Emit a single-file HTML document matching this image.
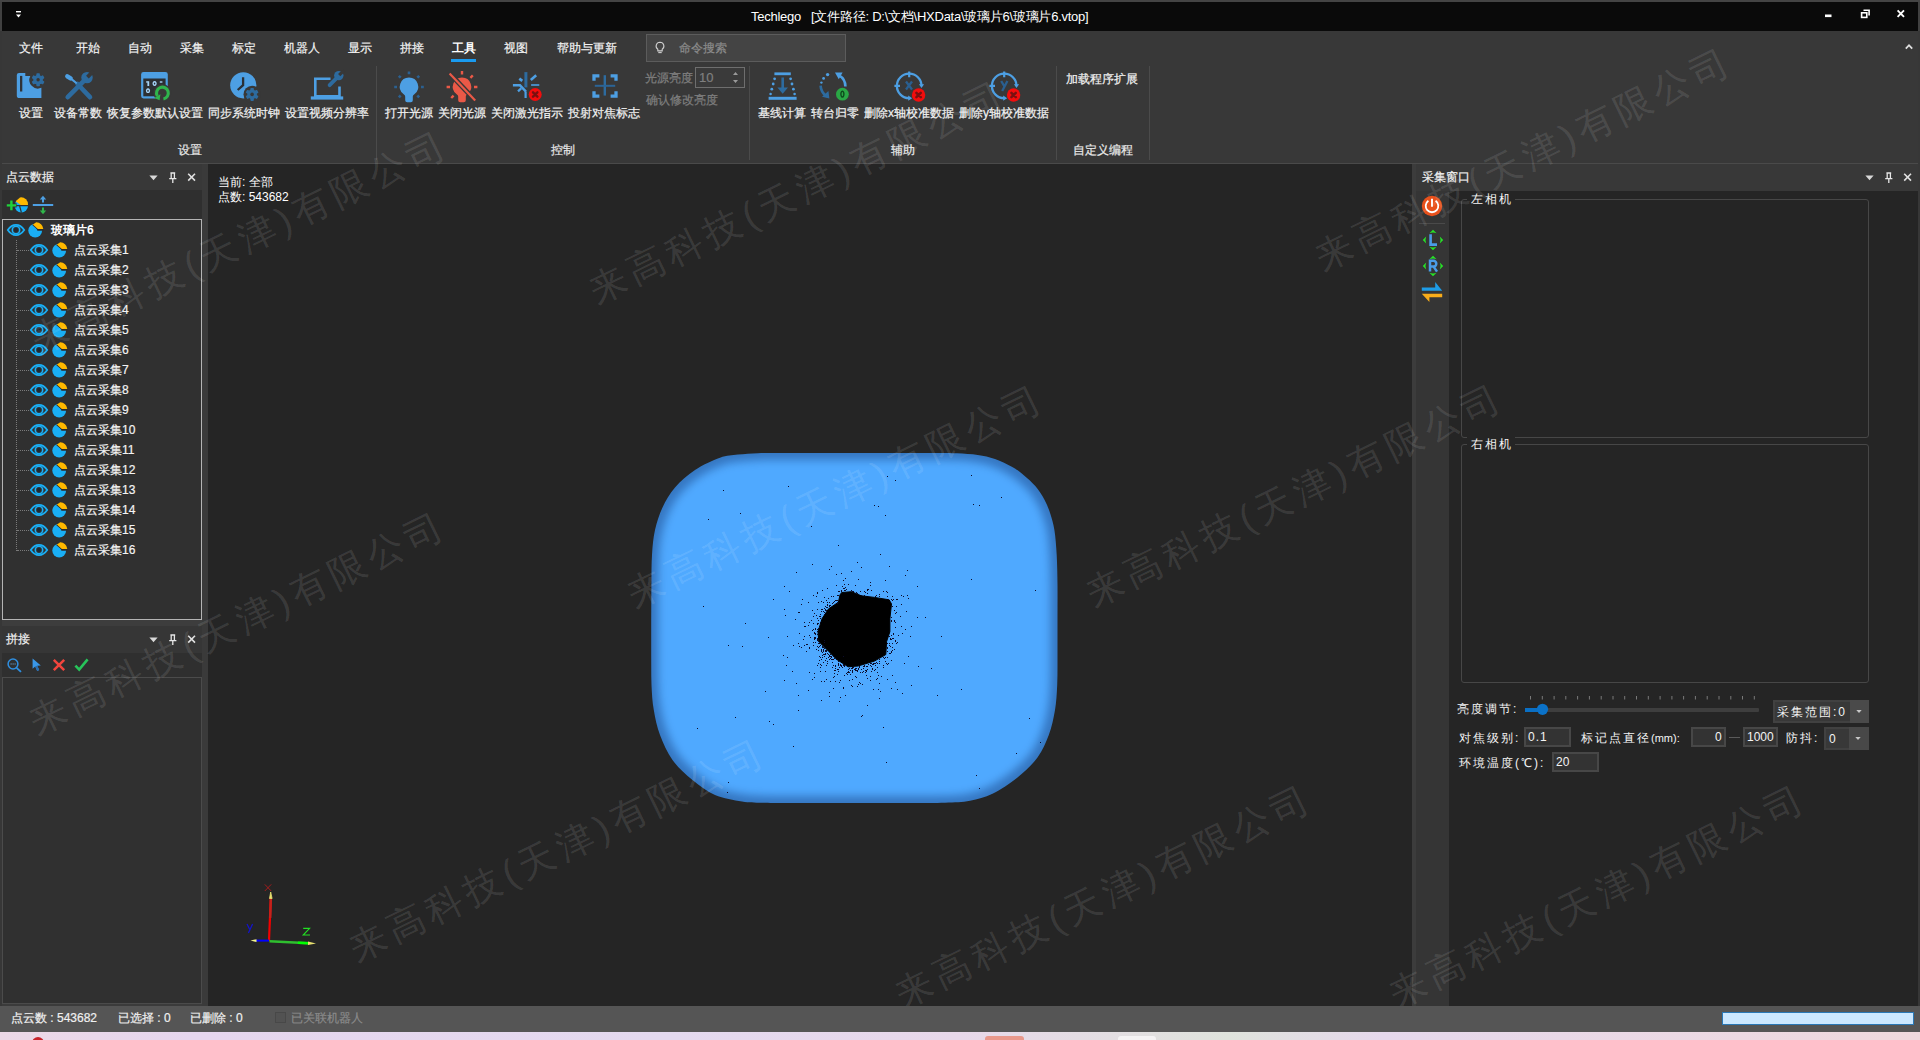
<!DOCTYPE html>
<html lang="zh">
<head>
<meta charset="utf-8">
<title>Techlego</title>
<style>
html,body{margin:0;padding:0;}
body{width:1920px;height:1040px;overflow:hidden;background:#444;font-family:"Liberation Sans",sans-serif;font-size:12px;color:#f0f0f0;position:relative;}
.a{position:absolute;white-space:nowrap;overflow:visible;}
.t{position:absolute;white-space:nowrap;line-height:14px;height:14px;-webkit-text-stroke:0.2px currentColor;}
svg{position:absolute;overflow:visible;}
#title{left:2px;top:2px;width:1916px;height:29px;background:#0a0a0a;}
#ribbon{left:2px;top:31px;width:1916px;height:132px;background:#383838;}
#ribline{left:2px;top:163px;width:1916px;height:1px;background:#4a4a4a;}
#main{left:2px;top:164px;width:1916px;height:842px;background:#3a3a3a;}
#view{left:208px;top:164px;width:1204px;height:842px;background:#252525;}
#status{left:0;top:1006px;width:1920px;height:26px;background:#555555;}
#desk{left:0;top:1032px;width:1920px;height:8px;background:linear-gradient(90deg,#ecd8e6 0%,#e6d6ee 10%,#e4d9ef 35%,#e8d8ea 50%,#dfe3dc 64%,#e6d8ec 72%,#efd9dd 100%);}
.vsep{position:absolute;width:1px;top:66px;height:94px;background:#4b4b4b;}
.tab{color:#f2f2f2;top:41px;}
.lbl{color:#f2f2f2;top:106px;text-align:center;}
.grp{color:#e8e8e8;top:143px;}
.dis{color:#7f7f7f;}
.ph{position:absolute;background:#383838;height:27px;}
.song{letter-spacing:2px;color:#f4f4f4;-webkit-text-stroke:0;}
.ns{-webkit-text-stroke:0;}
.inp{position:absolute;box-sizing:border-box;border:2px solid #474747;background:#333;height:20px;}
.wm{position:absolute;white-space:nowrap;font-size:37px;letter-spacing:5.5px;color:rgba(255,255,255,0.115);transform-origin:0 50%;transform:rotate(-26deg) translateX(-18.5px);line-height:40px;height:40px;font-weight:300;}
.wp{letter-spacing:5.5px;}
</style>
</head>
<body>
<div class="a" style="left:0;top:0;width:1920px;height:2px;background:#444;"></div>
<div class="a" style="left:0;top:2px;width:1920px;height:29px;background:#404040;"></div>
<div class="a" style="left:0;top:31px;width:1920px;height:975px;background:#373737;"></div>
<div class="a" id="title"></div>
<div class="a" id="ribbon"></div>
<div class="a" id="ribline"></div>
<div class="a" id="main"></div>
<div class="a" id="view"></div>
<div class="a" id="status"></div>
<div class="a" id="desk"></div>

<!-- TITLEBAR -->
<svg style="left:15px;top:9px" width="8" height="10" viewBox="0 0 8 10"><rect x="1" y="2" width="5" height="1.4" fill="#fff"/><path d="M1 5.4h5L3.5 8.4z" fill="#fff"/></svg>
<div class="t ns" style="left:751px;top:10px;font-size:13px;color:#fff;letter-spacing:-0.250px;">Techlego&nbsp;&nbsp;&nbsp;[文件路径: D:\文档\HXData\玻璃片6\玻璃片6.vtop]</div>
<svg style="left:1824px;top:8px" width="84" height="12" viewBox="0 0 84 12">
 <rect x="1" y="6.5" width="6.5" height="2.6" fill="#fff"/>
 <path d="M39.5 2.2h5.6v5.2" fill="none" stroke="#fff" stroke-width="1.6"/><rect x="37.6" y="4.8" width="5.2" height="4.6" fill="none" stroke="#fff" stroke-width="1.6"/>
 <path d="M73.6 2.4l6.4 6.4M80 2.4l-6.4 6.4" stroke="#fff" stroke-width="1.9"/>
</svg>

<!--TABS-->
<div class="t tab" style="left:19px;">文件</div>
<div class="t tab" style="left:76px;">开始</div>
<div class="t tab" style="left:128px;">自动</div>
<div class="t tab" style="left:180px;">采集</div>
<div class="t tab" style="left:232px;">标定</div>
<div class="t tab" style="left:284px;">机器人</div>
<div class="t tab" style="left:348px;">显示</div>
<div class="t tab" style="left:400px;">拼接</div>
<div class="t tab ns" style="left:452px;font-weight:bold;color:#fff;">工具</div>
<div class="a" style="left:451px;top:59px;width:25px;height:3px;background:#1a9bf0;"></div>
<div class="t tab" style="left:504px;">视图</div>
<div class="t tab" style="left:557px;">帮助与更新</div>
<div class="a" style="left:646px;top:34px;width:200px;height:28px;box-sizing:border-box;border:1px solid #5c5c5c;background:#444444;"></div>
<svg style="left:654px;top:41px" width="12" height="14" viewBox="0 0 12 14"><path d="M6 1.2a3.9 3.9 0 0 0-2.2 7.1v1.6h4.4V8.3A3.9 3.9 0 0 0 6 1.2z" fill="none" stroke="#d0d0d0" stroke-width="1.1"/><path d="M4.3 11.6h3.4" stroke="#d0d0d0" stroke-width="1.1"/></svg>
<div class="t" style="left:679px;top:41px;color:#8c8c8c;">命令搜索</div>
<svg style="left:1905px;top:43px" width="8" height="7" viewBox="0 0 8 7"><path d="M0.8 5.6L4 2.2l3.2 3.4" fill="none" stroke="#e0e0e0" stroke-width="1.8"/></svg>
<!--RIBBON-->
<!-- icon: settings -->
<svg style="left:16px;top:70px" width="30" height="30" viewBox="0 0 30 30">
 <path d="M3 2.900H9.300V5.900H14.300A8.700 8.700 0 0 0 25.400 17.850V28.100H3.400A2.600 2.600 0 0 1 0.800 25.500V5.100A2.200 2.200 0 0 1 3 2.900Z" fill="#4d9fe3"/>
 <rect x="4" y="5.900" width="2.300" height="15.600" fill="#2f3338"/>
 <g fill="#2d6b9f"><circle cx="22.1" cy="9.8" r="4.81"/><rect x="20.35" y="3.30" width="3.51" height="13.00" rx="0.8" transform="rotate(0 22.1 9.8)"/><rect x="20.35" y="3.30" width="3.51" height="13.00" rx="0.8" transform="rotate(60 22.1 9.8)"/><rect x="20.35" y="3.30" width="3.51" height="13.00" rx="0.8" transform="rotate(120 22.1 9.8)"/></g><circle cx="22.1" cy="9.8" r="1.7" fill="#3a3430"/>
</svg>
<!-- icon: tools -->
<svg style="left:64px;top:70px" width="30" height="30" viewBox="0 0 30 30">
 <path d="M13.500 14L26 27.200" stroke="#2d6b9f" stroke-width="4.600" stroke-linecap="round"/>
 <path d="M3.700 27.200L20.400 10.300" stroke="#2d6b9f" stroke-width="4.600" stroke-linecap="round"/>
 <circle cx="23" cy="7.600" r="5.700" fill="#2d6b9f"/>
 <path d="M23.400 7.200L29.400 1.200" stroke="#383838" stroke-width="3.800"/>
 <path d="M3.300 6.300L6.600 8.400" stroke="#4d9fe3" stroke-width="4.400" stroke-linecap="round"/>
 <path d="M6.600 8.400L12 12.800" stroke="#4d9fe3" stroke-width="2.100" stroke-linecap="round"/>
</svg>
<!-- icon: restore defaults -->
<svg style="left:140px;top:70px" width="32" height="32" viewBox="0 0 32 32">
 <rect x="1.100" y="2.100" width="26.700" height="26.400" rx="2.400" fill="#4d9fe3"/>
 <rect x="3.300" y="8.500" width="22.300" height="17.800" fill="#2c2f33"/>
 <g fill="#a4d2f6"><rect x="7.400" y="11.200" width="1.800" height="4.800"/><rect x="6.200" y="11.200" width="1.600" height="1.500"/>
 <path d="M14.600 11a2.100 2.500 0 1 0 .01 0zm0 1.400a.7 1.100 0 1 1-.01 0z" fill-rule="evenodd"/>
 <rect x="19.800" y="11.300" width="2.600" height="1.400"/>
 <path d="M8 18.300a2.100 2.400 0 1 0 .01 0zm0 1.400a.7 1 0 1 1-.01 0z" fill-rule="evenodd"/></g>
 <circle cx="22.400" cy="23.100" r="9" fill="#383838"/>
 <path d="M23.420 28.910A5.900 5.900 0 1 0 17.290 26.050" fill="none" stroke="#2fb44c" stroke-width="3.100"/>
 <path d="M14.100 27.900L20.400 24.200 19.600 30.300z" fill="#2fb44c"/>
</svg>
<!-- icon: clock -->
<svg style="left:229px;top:70px" width="32" height="32" viewBox="0 0 32 32">
 <circle cx="14.300" cy="15.300" r="13.100" fill="#4d9fe3"/>
 <path d="M14.100 7.200v8l-5.400 4.800" fill="none" stroke="#2a3036" stroke-width="2.300"/>
 <circle cx="23.100" cy="24.400" r="8.600" fill="#383838"/>
 <g fill="#2d6b9f"><circle cx="23.1" cy="24.4" r="4.81"/><rect x="21.35" y="17.90" width="3.51" height="13.00" rx="0.8" transform="rotate(0 23.1 24.4)"/><rect x="21.35" y="17.90" width="3.51" height="13.00" rx="0.8" transform="rotate(60 23.1 24.4)"/><rect x="21.35" y="17.90" width="3.51" height="13.00" rx="0.8" transform="rotate(120 23.1 24.4)"/></g><circle cx="23.1" cy="24.4" r="1.8" fill="#383838"/>
</svg>
<!-- icon: laptop wrench -->
<svg style="left:310px;top:70px" width="34" height="32" viewBox="0 0 34 32">
 <path d="M4 7.500h16.500v2.600H6.600V25h21.600V16.500h2.600V27H4z" fill="#4d9fe3"/>
 <rect x="0.800" y="26.400" width="32.400" height="3.200" fill="#4d9fe3"/>
 <path d="M19.600 15.200L27.600 7.200" stroke="#2d6b9f" stroke-width="3.800" stroke-linecap="round"/>
 <circle cx="28.800" cy="5.600" r="4.700" fill="#2d6b9f"/>
 <path d="M29.200 5.200L34 0.400" stroke="#383838" stroke-width="3.200"/>
</svg>
<div class="vsep" style="left:376px;"></div>
<!-- icon: bulb on -->
<svg style="left:392px;top:69px" width="34" height="36" viewBox="0 0 34 36">
 <path d="M17 8.600a9.200 9.200 0 0 0-5.600 16.500c1.200.9 1.800 1.800 1.800 2.800v3.400a2 2 0 0 0 2 2h3.600a2 2 0 0 0 2-2v-3.400c0-1 .6-1.900 1.800-2.800A9.200 9.200 0 0 0 17 8.600z" fill="#4d9fe3"/>
 <g stroke="#2b6090" stroke-width="2.600" stroke-linecap="butt"><path d="M17 2.600v2.600M6.800 6.800l1.900 1.900M27.200 6.800l-1.900 1.900M2.200 18h2.800M31.800 18H29M6.800 28.400l1.900-1.900M27.200 28.400l-1.900-1.900"/></g>
</svg>
<!-- icon: bulb off -->
<svg style="left:445px;top:69px" width="34" height="36" viewBox="0 0 34 36">
 <path d="M17 8.6a9.2 9.2 0 0 0-5.6 16.5c1.2.9 1.8 1.8 1.8 2.8v3.4a2 2 0 0 0 2 2h3.600a2 2 0 0 0 2-2v-3.4c0-1 .6-1.900 1.800-2.800A9.2 9.2 0 0 0 17 8.6z" fill="#ea5947"/>
 <g stroke="#ea5947" stroke-width="2.4"><path d="M17 2v3.4M27.8 6.4l-2.4 2.4M1.6 18h3.4M32.4 18H29M6.2 29l2.4-2.4"/></g>
 <path d="M4.6 4.4l25.6 27" stroke="#383838" stroke-width="5"/>
 <path d="M4.6 4.4l25.6 27" stroke="#ea5947" stroke-width="2.2"/>
</svg>
<!-- icon: laser off -->
<svg style="left:511px;top:70px" width="34" height="34" viewBox="0 0 34 34">
 <path d="M14.900 2.100V17.400" stroke="#2d6b9f" stroke-width="3"/>
 <g stroke="#4d9fe3" fill="none"><path d="M8.300 8.600l3 2.300M19.800 9.900l5.400-4.700" stroke-width="2.600"/><path d="M20.100 15h8.200" stroke-width="1.600"/><path d="M1.900 15.300H9l6 6.300" stroke-width="2.400"/><path d="M7 21.400l3.200-3M14.600 21.400V28" stroke-width="2.200"/></g>
 <circle cx="24.2" cy="24.5" r="6.500" fill="#f20d0d"/><path d="M22.0 22.3l4.400 4.400M26.4 22.3l-4.400 4.400" stroke="#7a1010" stroke-width="2.400" stroke-linecap="round"/>
</svg>
<!-- icon: focus mark -->
<svg style="left:591px;top:72px" width="28" height="28" viewBox="0 0 28 28">
 <g fill="none" stroke="#4d9fe3" stroke-width="3.300"><path d="M3 8.800V3.800h5.400M19.600 3.800H25v5M25 19.200v5h-5.400M8.400 24.200H3v-5"/></g>
 <path d="M13.800 3.200v20.400" stroke="#2d6b9f" stroke-width="2.400"/><path d="M3.800 13.800h20.400" stroke="#2b6496" stroke-width="2"/>
</svg>
<div class="t lbl" style="left:19px;">设置</div>
<div class="t lbl" style="left:54px;">设备常数</div>
<div class="t lbl" style="left:107px;">恢复参数默认设置</div>
<div class="t lbl" style="left:208px;">同步系统时钟</div>
<div class="t lbl" style="left:285px;">设置视频分辨率</div>
<div class="t lbl" style="left:385px;">打开光源</div>
<div class="t lbl" style="left:438px;">关闭光源</div>
<div class="t lbl" style="left:491px;">关闭激光指示</div>
<div class="t lbl" style="left:568px;">投射对焦标志</div>
<div class="t grp" style="left:178px;">设置</div>
<div class="t grp" style="left:551px;">控制</div>
<div class="t dis" style="left:645px;top:71px;">光源亮度</div>
<div class="a" style="left:695px;top:67px;width:50px;height:21px;box-sizing:border-box;border:1px solid #6e6e6e;background:#3a3a3a;"></div>
<div class="t dis" style="left:699px;top:71px;font-size:13px;">10</div>
<svg style="left:732px;top:71px" width="7" height="13" viewBox="0 0 7 13"><path d="M1 4l2.5-3 2.5 3zM1 9l2.5 3 2.5-3z" fill="#9a9a9a"/></svg>
<div class="t dis" style="left:646px;top:93px;">确认修改亮度</div>
<div class="vsep" style="left:749px;"></div>
<!-- icon: baseline -->
<svg style="left:767px;top:71px" width="32" height="30" viewBox="0 0 32 30">
 <rect x="7.4" y="1.4" width="16.4" height="2.8" fill="#4d9fe3"/><rect x="1.6" y="25.8" width="28" height="3" fill="#4d9fe3"/>
 <g fill="#4d9fe3"><circle cx="7.6" cy="7.8" r="1.4"/><circle cx="6.2" cy="13" r="1.4"/><circle cx="4.8" cy="18.2" r="1.4"/><circle cx="3.6" cy="23" r="1.3"/><circle cx="23.6" cy="7.8" r="1.4"/><circle cx="25" cy="13" r="1.4"/><circle cx="26.4" cy="18.2" r="1.4"/><circle cx="27.6" cy="23" r="1.3"/></g>
 <path d="M14.4 6.4h2.6v10h4l-5.3 6.4-5.3-6.4h4z" fill="#2d6b9f"/>
</svg>
<!-- icon: turntable zero -->
<svg style="left:818px;top:70px" width="34" height="32" viewBox="0 0 34 32">
 <g fill="#4d9fe3"><circle cx="9.6" cy="4.6" r="1.7"/><circle cx="5.6" cy="8.4" r="1.4"/><circle cx="3.4" cy="12.6" r="1.2"/></g>
 <path d="M2.6 15.6c.2 4.4 2.2 7.8 5.6 10.400" fill="none" stroke="#2d6b9f" stroke-width="2.6"/><path d="M4 26.8l7.400 1.600-1-7.400z" fill="#2d6b9f"/>
 <path d="M27.4 16.6c0-5-2.200-8.800-6.400-11.200" fill="none" stroke="#4d9fe3" stroke-width="2.6"/><path d="M17 2.400l7.600.2-3.800 6.600z" fill="#4d9fe3"/>
 <circle cx="24.4" cy="24.2" r="6.4" fill="#2aa745"/>
 <path d="M24.4 20.400a2.200 3.700 0 1 0 .01 0zm0 1.600a.8 2.100 0 1 1-.01 0z" fill="#0d4a1c" fill-rule="evenodd"/>
</svg>
<!-- icon: del x -->
<svg style="left:892px;top:70px" width="34" height="34" viewBox="0 0 34 34">
 <path d="M29.500 15.900A12.300 12.300 0 1 0 17.200 28.200" fill="none" stroke="#4d9fe3" stroke-width="2.300"/>
 <path d="M26.900 14.200h5.200l-2.600 3.800zM16.200 25.600v5.200l4-2.600z" fill="#4d9fe3"/>
 <path d="M17.200 1.600v5.600M2.400 15.900h5.600" stroke="#4d9fe3" stroke-width="2.200"/>
 <path d="M14 11.500l6 8M20 11.500l-6 8" stroke="#2a5f90" stroke-width="2.300"/>
 <circle cx="26.6" cy="25" r="6.700" fill="#f20d0d"/><path d="M24.4 22.8l4.400 4.400M28.8 22.8l-4.400 4.400" stroke="#7a1010" stroke-width="2.500" stroke-linecap="round"/>
</svg>
<!-- icon: del y -->
<svg style="left:987px;top:70px" width="34" height="34" viewBox="0 0 34 34">
 <path d="M29.500 15.900A12.300 12.300 0 1 0 17.200 28.200" fill="none" stroke="#4d9fe3" stroke-width="2.300"/>
 <path d="M26.900 14.200h5.200l-2.600 3.800zM16.200 25.600v5.200l4-2.600z" fill="#4d9fe3"/>
 <path d="M17.200 1.600v5.600M2.400 15.900h5.600" stroke="#4d9fe3" stroke-width="2.200"/>
 <path d="M14.200 11l3.200 5.400M20.400 11l-5.200 10" stroke="#2a5f90" stroke-width="2.300"/>
 <circle cx="26.6" cy="25" r="6.700" fill="#f20d0d"/><path d="M24.4 22.8l4.400 4.400M28.8 22.8l-4.400 4.400" stroke="#7a1010" stroke-width="2.500" stroke-linecap="round"/>
</svg>
<div class="t lbl" style="left:758px;">基线计算</div>
<div class="t lbl" style="left:811px;">转台归零</div>
<div class="t lbl" style="left:864px;">删除x轴校准数据</div>
<div class="t lbl" style="left:959px;">删除y轴校准数据</div>
<div class="t grp" style="left:891px;">辅助</div>
<div class="vsep" style="left:1056px;"></div>
<div class="t" style="left:1066px;top:72px;color:#f2f2f2;">加载程序扩展</div>
<div class="t grp" style="left:1073px;">自定义编程</div>
<div class="vsep" style="left:1149px;"></div>
<!--LEFT-->
<div class="a" style="left:2px;top:164px;width:200px;height:842px;background:#3b3b3b;"></div>
<div class="ph" style="left:2px;top:164px;width:200px;"></div>
<div class="t" style="left:6px;top:170px;color:#f0f0f0;">点云数据</div>
<svg style="left:149px;top:172px" width="48" height="12" viewBox="0 0 48 12"><path d="M0.400 3.600h8.200l-4.100 4.600z" fill="#d8d8d8"/><path d="M21.400 1h4.800M22.200 1v5.400M25.400 1v5.400M20.200 6.600h7.200M23.800 6.800V11" stroke="#e6e6e6" stroke-width="1.300" fill="none"/><path d="M39.200 1.800l6.800 6.800M46 1.800l-6.800 6.800" stroke="#e0e0e0" stroke-width="1.600"/></svg>
<div class="a" style="left:2px;top:190px;width:200px;height:29px;background:#2f2f2f;"></div>
<svg style="left:6px;top:196px" width="24" height="18" viewBox="0 0 24 18">
 <path d="M8.600 9.800a6.700 6.700 0 1 0 13.400 0 6.700 6.700 0 1 0-13.400 0z" fill="#1aaff5"/>
 <path d="M9.600 5.200L14 1.400a7 7 0 0 1 8 7.800H15.200z" fill="#ffb900"/>
 <path d="M13.600 9.800l1.800 6.800M9 9.600h13" stroke="#2f2f2f" stroke-width="1.200"/>
 <path d="M5.400 4.400v10M0.600 9.400h10" stroke="#2f2f2f" stroke-width="4.400"/>
 <path d="M5.400 4.600v9.600M0.800 9.400h9.400" stroke="#1fd13a" stroke-width="2.400"/>
</svg>
<svg style="left:32px;top:195px" width="22" height="20" viewBox="0 0 22 20">
 <rect x="0.800" y="9" width="20.400" height="2" fill="#4d9fe3"/>
 <path d="M11 7.400V3" stroke="#4d9fe3" stroke-width="2"/><path d="M7.800 4.600L11 0.800l3.200 3.800z" fill="#4d9fe3"/>
 <path d="M11 12.600V17" stroke="#2fb64a" stroke-width="2"/><path d="M7.800 15.400L11 19.200l3.200-3.800z" fill="#2fb64a"/>
</svg>
<div class="a" style="left:2px;top:219px;width:200px;height:401px;box-sizing:border-box;border:1px solid #b4b4b4;background:#303030;"></div>
<svg style="left:7px;top:224px" width="18" height="12" viewBox="0 0 18 12"><path d="M0.8 6C3.4 2.2 6.200 0.9 9 0.9s5.600 1.300 8.200 5.100C14.600 9.800 11.800 11.100 9 11.100S3.400 9.800 0.800 6z" fill="none" stroke="#1aaff5" stroke-width="1.800"/><circle cx="9" cy="6" r="3.700" fill="none" stroke="#1aaff5" stroke-width="1.600"/><circle cx="9" cy="6" r="2" fill="#1c2733"/></svg><svg style="left:28px;top:222px" width="16" height="16" viewBox="0 0 16 16"><circle cx="7.200" cy="8.600" r="6.900" fill="#1aaff5"/><path d="M6.400 0.400A7.200 7.200 0 0 1 15.400 8.800H9.400z" fill="#2d2d2d"/><path d="M7.800 0.500l-3.600 2.500 5.400 4.700h5.600A7 7 0 0 0 7.800 0.500z" fill="#2a2a2a"/><path d="M8.200 0.300l-3.300 2.300 4.900 4.300h5.500A7 7 0 0 0 8.200 0.300z" fill="#ffb900"/></svg>
<div class="t ns" style="left:51px;top:223px;font-weight:bold;color:#fff;">玻璃片6</div>
<div class="a" style="left:16px;top:240px;width:0;height:311px;border-left:1px dotted #7a7a7a;"></div>
<div class="a" style="left:17px;top:250px;width:12px;height:0;border-top:1px dotted #7a7a7a;"></div><svg style="left:30px;top:244px" width="18" height="12" viewBox="0 0 18 12"><path d="M0.8 6C3.4 2.2 6.200 0.9 9 0.9s5.600 1.300 8.200 5.100C14.600 9.800 11.800 11.100 9 11.100S3.400 9.800 0.800 6z" fill="none" stroke="#1aaff5" stroke-width="1.800"/><circle cx="9" cy="6" r="3.700" fill="none" stroke="#1aaff5" stroke-width="1.600"/><circle cx="9" cy="6" r="2" fill="#1c2733"/></svg><svg style="left:51.5px;top:242px" width="16" height="16" viewBox="0 0 16 16"><circle cx="7.200" cy="8.600" r="6.900" fill="#1aaff5"/><path d="M6.400 0.400A7.200 7.200 0 0 1 15.400 8.800H9.400z" fill="#2d2d2d"/><path d="M7.800 0.500l-3.600 2.500 5.400 4.700h5.600A7 7 0 0 0 7.800 0.500z" fill="#2a2a2a"/><path d="M8.200 0.300l-3.300 2.300 4.900 4.300h5.500A7 7 0 0 0 8.200 0.300z" fill="#ffb900"/></svg><div class="t" style="left:74px;top:243px;color:#f4f4f4;">点云采集1</div>
<div class="a" style="left:17px;top:270px;width:12px;height:0;border-top:1px dotted #7a7a7a;"></div><svg style="left:30px;top:264px" width="18" height="12" viewBox="0 0 18 12"><path d="M0.8 6C3.4 2.2 6.200 0.9 9 0.9s5.600 1.300 8.200 5.100C14.600 9.800 11.800 11.100 9 11.100S3.400 9.800 0.800 6z" fill="none" stroke="#1aaff5" stroke-width="1.800"/><circle cx="9" cy="6" r="3.700" fill="none" stroke="#1aaff5" stroke-width="1.600"/><circle cx="9" cy="6" r="2" fill="#1c2733"/></svg><svg style="left:51.5px;top:262px" width="16" height="16" viewBox="0 0 16 16"><circle cx="7.200" cy="8.600" r="6.900" fill="#1aaff5"/><path d="M6.400 0.400A7.200 7.200 0 0 1 15.400 8.800H9.400z" fill="#2d2d2d"/><path d="M7.800 0.500l-3.600 2.500 5.400 4.700h5.600A7 7 0 0 0 7.800 0.500z" fill="#2a2a2a"/><path d="M8.200 0.300l-3.300 2.300 4.900 4.300h5.500A7 7 0 0 0 8.200 0.300z" fill="#ffb900"/></svg><div class="t" style="left:74px;top:263px;color:#f4f4f4;">点云采集2</div>
<div class="a" style="left:17px;top:290px;width:12px;height:0;border-top:1px dotted #7a7a7a;"></div><svg style="left:30px;top:284px" width="18" height="12" viewBox="0 0 18 12"><path d="M0.8 6C3.4 2.2 6.200 0.9 9 0.9s5.600 1.300 8.200 5.100C14.600 9.800 11.800 11.100 9 11.100S3.400 9.800 0.800 6z" fill="none" stroke="#1aaff5" stroke-width="1.800"/><circle cx="9" cy="6" r="3.700" fill="none" stroke="#1aaff5" stroke-width="1.600"/><circle cx="9" cy="6" r="2" fill="#1c2733"/></svg><svg style="left:51.5px;top:282px" width="16" height="16" viewBox="0 0 16 16"><circle cx="7.200" cy="8.600" r="6.900" fill="#1aaff5"/><path d="M6.400 0.400A7.200 7.200 0 0 1 15.400 8.800H9.400z" fill="#2d2d2d"/><path d="M7.800 0.500l-3.600 2.500 5.400 4.700h5.600A7 7 0 0 0 7.800 0.500z" fill="#2a2a2a"/><path d="M8.200 0.300l-3.300 2.300 4.900 4.300h5.500A7 7 0 0 0 8.200 0.300z" fill="#ffb900"/></svg><div class="t" style="left:74px;top:283px;color:#f4f4f4;">点云采集3</div>
<div class="a" style="left:17px;top:310px;width:12px;height:0;border-top:1px dotted #7a7a7a;"></div><svg style="left:30px;top:304px" width="18" height="12" viewBox="0 0 18 12"><path d="M0.8 6C3.4 2.2 6.200 0.9 9 0.9s5.600 1.300 8.200 5.100C14.600 9.800 11.800 11.100 9 11.100S3.400 9.800 0.800 6z" fill="none" stroke="#1aaff5" stroke-width="1.800"/><circle cx="9" cy="6" r="3.700" fill="none" stroke="#1aaff5" stroke-width="1.600"/><circle cx="9" cy="6" r="2" fill="#1c2733"/></svg><svg style="left:51.5px;top:302px" width="16" height="16" viewBox="0 0 16 16"><circle cx="7.200" cy="8.600" r="6.900" fill="#1aaff5"/><path d="M6.400 0.400A7.200 7.200 0 0 1 15.400 8.800H9.400z" fill="#2d2d2d"/><path d="M7.800 0.500l-3.600 2.500 5.400 4.700h5.600A7 7 0 0 0 7.800 0.500z" fill="#2a2a2a"/><path d="M8.200 0.300l-3.300 2.300 4.900 4.300h5.500A7 7 0 0 0 8.200 0.300z" fill="#ffb900"/></svg><div class="t" style="left:74px;top:303px;color:#f4f4f4;">点云采集4</div>
<div class="a" style="left:17px;top:330px;width:12px;height:0;border-top:1px dotted #7a7a7a;"></div><svg style="left:30px;top:324px" width="18" height="12" viewBox="0 0 18 12"><path d="M0.8 6C3.4 2.2 6.200 0.9 9 0.9s5.600 1.300 8.200 5.100C14.600 9.800 11.800 11.100 9 11.100S3.400 9.800 0.800 6z" fill="none" stroke="#1aaff5" stroke-width="1.800"/><circle cx="9" cy="6" r="3.700" fill="none" stroke="#1aaff5" stroke-width="1.600"/><circle cx="9" cy="6" r="2" fill="#1c2733"/></svg><svg style="left:51.5px;top:322px" width="16" height="16" viewBox="0 0 16 16"><circle cx="7.200" cy="8.600" r="6.900" fill="#1aaff5"/><path d="M6.400 0.400A7.200 7.200 0 0 1 15.400 8.800H9.400z" fill="#2d2d2d"/><path d="M7.800 0.500l-3.600 2.500 5.400 4.700h5.600A7 7 0 0 0 7.800 0.500z" fill="#2a2a2a"/><path d="M8.200 0.300l-3.300 2.300 4.900 4.300h5.500A7 7 0 0 0 8.200 0.300z" fill="#ffb900"/></svg><div class="t" style="left:74px;top:323px;color:#f4f4f4;">点云采集5</div>
<div class="a" style="left:17px;top:350px;width:12px;height:0;border-top:1px dotted #7a7a7a;"></div><svg style="left:30px;top:344px" width="18" height="12" viewBox="0 0 18 12"><path d="M0.8 6C3.4 2.2 6.200 0.9 9 0.9s5.600 1.300 8.200 5.100C14.600 9.800 11.800 11.100 9 11.100S3.400 9.800 0.800 6z" fill="none" stroke="#1aaff5" stroke-width="1.800"/><circle cx="9" cy="6" r="3.700" fill="none" stroke="#1aaff5" stroke-width="1.600"/><circle cx="9" cy="6" r="2" fill="#1c2733"/></svg><svg style="left:51.5px;top:342px" width="16" height="16" viewBox="0 0 16 16"><circle cx="7.200" cy="8.600" r="6.900" fill="#1aaff5"/><path d="M6.400 0.400A7.200 7.200 0 0 1 15.400 8.800H9.400z" fill="#2d2d2d"/><path d="M7.800 0.500l-3.600 2.500 5.400 4.700h5.600A7 7 0 0 0 7.800 0.500z" fill="#2a2a2a"/><path d="M8.200 0.300l-3.300 2.300 4.900 4.300h5.500A7 7 0 0 0 8.200 0.300z" fill="#ffb900"/></svg><div class="t" style="left:74px;top:343px;color:#f4f4f4;">点云采集6</div>
<div class="a" style="left:17px;top:370px;width:12px;height:0;border-top:1px dotted #7a7a7a;"></div><svg style="left:30px;top:364px" width="18" height="12" viewBox="0 0 18 12"><path d="M0.8 6C3.4 2.2 6.200 0.9 9 0.9s5.600 1.300 8.200 5.100C14.600 9.800 11.800 11.100 9 11.100S3.400 9.800 0.800 6z" fill="none" stroke="#1aaff5" stroke-width="1.800"/><circle cx="9" cy="6" r="3.700" fill="none" stroke="#1aaff5" stroke-width="1.600"/><circle cx="9" cy="6" r="2" fill="#1c2733"/></svg><svg style="left:51.5px;top:362px" width="16" height="16" viewBox="0 0 16 16"><circle cx="7.200" cy="8.600" r="6.900" fill="#1aaff5"/><path d="M6.400 0.400A7.200 7.200 0 0 1 15.400 8.800H9.400z" fill="#2d2d2d"/><path d="M7.800 0.500l-3.600 2.500 5.400 4.700h5.600A7 7 0 0 0 7.800 0.500z" fill="#2a2a2a"/><path d="M8.200 0.300l-3.300 2.300 4.900 4.300h5.500A7 7 0 0 0 8.200 0.300z" fill="#ffb900"/></svg><div class="t" style="left:74px;top:363px;color:#f4f4f4;">点云采集7</div>
<div class="a" style="left:17px;top:390px;width:12px;height:0;border-top:1px dotted #7a7a7a;"></div><svg style="left:30px;top:384px" width="18" height="12" viewBox="0 0 18 12"><path d="M0.8 6C3.4 2.2 6.200 0.9 9 0.9s5.600 1.300 8.200 5.100C14.600 9.800 11.800 11.100 9 11.100S3.400 9.800 0.800 6z" fill="none" stroke="#1aaff5" stroke-width="1.800"/><circle cx="9" cy="6" r="3.700" fill="none" stroke="#1aaff5" stroke-width="1.600"/><circle cx="9" cy="6" r="2" fill="#1c2733"/></svg><svg style="left:51.5px;top:382px" width="16" height="16" viewBox="0 0 16 16"><circle cx="7.200" cy="8.600" r="6.900" fill="#1aaff5"/><path d="M6.400 0.400A7.200 7.200 0 0 1 15.400 8.800H9.400z" fill="#2d2d2d"/><path d="M7.800 0.500l-3.600 2.500 5.400 4.700h5.600A7 7 0 0 0 7.800 0.500z" fill="#2a2a2a"/><path d="M8.200 0.300l-3.300 2.300 4.900 4.300h5.500A7 7 0 0 0 8.200 0.300z" fill="#ffb900"/></svg><div class="t" style="left:74px;top:383px;color:#f4f4f4;">点云采集8</div>
<div class="a" style="left:17px;top:410px;width:12px;height:0;border-top:1px dotted #7a7a7a;"></div><svg style="left:30px;top:404px" width="18" height="12" viewBox="0 0 18 12"><path d="M0.8 6C3.4 2.2 6.200 0.9 9 0.9s5.600 1.300 8.200 5.100C14.600 9.800 11.800 11.100 9 11.100S3.400 9.800 0.800 6z" fill="none" stroke="#1aaff5" stroke-width="1.800"/><circle cx="9" cy="6" r="3.700" fill="none" stroke="#1aaff5" stroke-width="1.600"/><circle cx="9" cy="6" r="2" fill="#1c2733"/></svg><svg style="left:51.5px;top:402px" width="16" height="16" viewBox="0 0 16 16"><circle cx="7.200" cy="8.600" r="6.900" fill="#1aaff5"/><path d="M6.400 0.400A7.200 7.200 0 0 1 15.400 8.800H9.400z" fill="#2d2d2d"/><path d="M7.800 0.500l-3.600 2.500 5.400 4.700h5.600A7 7 0 0 0 7.800 0.500z" fill="#2a2a2a"/><path d="M8.200 0.300l-3.300 2.300 4.900 4.300h5.500A7 7 0 0 0 8.200 0.300z" fill="#ffb900"/></svg><div class="t" style="left:74px;top:403px;color:#f4f4f4;">点云采集9</div>
<div class="a" style="left:17px;top:430px;width:12px;height:0;border-top:1px dotted #7a7a7a;"></div><svg style="left:30px;top:424px" width="18" height="12" viewBox="0 0 18 12"><path d="M0.8 6C3.4 2.2 6.200 0.9 9 0.9s5.600 1.300 8.200 5.100C14.600 9.800 11.800 11.100 9 11.100S3.400 9.800 0.800 6z" fill="none" stroke="#1aaff5" stroke-width="1.800"/><circle cx="9" cy="6" r="3.700" fill="none" stroke="#1aaff5" stroke-width="1.600"/><circle cx="9" cy="6" r="2" fill="#1c2733"/></svg><svg style="left:51.5px;top:422px" width="16" height="16" viewBox="0 0 16 16"><circle cx="7.200" cy="8.600" r="6.900" fill="#1aaff5"/><path d="M6.400 0.400A7.200 7.200 0 0 1 15.400 8.800H9.400z" fill="#2d2d2d"/><path d="M7.800 0.500l-3.600 2.500 5.400 4.700h5.600A7 7 0 0 0 7.800 0.500z" fill="#2a2a2a"/><path d="M8.200 0.300l-3.300 2.300 4.900 4.300h5.500A7 7 0 0 0 8.200 0.300z" fill="#ffb900"/></svg><div class="t" style="left:74px;top:423px;color:#f4f4f4;">点云采集10</div>
<div class="a" style="left:17px;top:450px;width:12px;height:0;border-top:1px dotted #7a7a7a;"></div><svg style="left:30px;top:444px" width="18" height="12" viewBox="0 0 18 12"><path d="M0.8 6C3.4 2.2 6.200 0.9 9 0.9s5.600 1.300 8.200 5.100C14.600 9.800 11.800 11.100 9 11.100S3.400 9.800 0.800 6z" fill="none" stroke="#1aaff5" stroke-width="1.800"/><circle cx="9" cy="6" r="3.700" fill="none" stroke="#1aaff5" stroke-width="1.600"/><circle cx="9" cy="6" r="2" fill="#1c2733"/></svg><svg style="left:51.5px;top:442px" width="16" height="16" viewBox="0 0 16 16"><circle cx="7.200" cy="8.600" r="6.900" fill="#1aaff5"/><path d="M6.400 0.400A7.200 7.200 0 0 1 15.400 8.800H9.400z" fill="#2d2d2d"/><path d="M7.800 0.500l-3.600 2.500 5.400 4.700h5.600A7 7 0 0 0 7.800 0.500z" fill="#2a2a2a"/><path d="M8.200 0.300l-3.300 2.300 4.900 4.300h5.500A7 7 0 0 0 8.200 0.300z" fill="#ffb900"/></svg><div class="t" style="left:74px;top:443px;color:#f4f4f4;">点云采集11</div>
<div class="a" style="left:17px;top:470px;width:12px;height:0;border-top:1px dotted #7a7a7a;"></div><svg style="left:30px;top:464px" width="18" height="12" viewBox="0 0 18 12"><path d="M0.8 6C3.4 2.2 6.200 0.9 9 0.9s5.600 1.300 8.200 5.100C14.600 9.800 11.800 11.100 9 11.100S3.400 9.800 0.800 6z" fill="none" stroke="#1aaff5" stroke-width="1.800"/><circle cx="9" cy="6" r="3.700" fill="none" stroke="#1aaff5" stroke-width="1.600"/><circle cx="9" cy="6" r="2" fill="#1c2733"/></svg><svg style="left:51.5px;top:462px" width="16" height="16" viewBox="0 0 16 16"><circle cx="7.200" cy="8.600" r="6.900" fill="#1aaff5"/><path d="M6.400 0.400A7.200 7.200 0 0 1 15.400 8.800H9.400z" fill="#2d2d2d"/><path d="M7.800 0.500l-3.600 2.500 5.400 4.700h5.600A7 7 0 0 0 7.800 0.500z" fill="#2a2a2a"/><path d="M8.200 0.300l-3.300 2.300 4.900 4.300h5.500A7 7 0 0 0 8.200 0.300z" fill="#ffb900"/></svg><div class="t" style="left:74px;top:463px;color:#f4f4f4;">点云采集12</div>
<div class="a" style="left:17px;top:490px;width:12px;height:0;border-top:1px dotted #7a7a7a;"></div><svg style="left:30px;top:484px" width="18" height="12" viewBox="0 0 18 12"><path d="M0.8 6C3.4 2.2 6.200 0.9 9 0.9s5.600 1.300 8.200 5.100C14.600 9.800 11.800 11.100 9 11.100S3.400 9.800 0.800 6z" fill="none" stroke="#1aaff5" stroke-width="1.800"/><circle cx="9" cy="6" r="3.700" fill="none" stroke="#1aaff5" stroke-width="1.600"/><circle cx="9" cy="6" r="2" fill="#1c2733"/></svg><svg style="left:51.5px;top:482px" width="16" height="16" viewBox="0 0 16 16"><circle cx="7.200" cy="8.600" r="6.900" fill="#1aaff5"/><path d="M6.400 0.400A7.200 7.200 0 0 1 15.400 8.800H9.400z" fill="#2d2d2d"/><path d="M7.800 0.500l-3.600 2.500 5.400 4.700h5.600A7 7 0 0 0 7.800 0.500z" fill="#2a2a2a"/><path d="M8.200 0.300l-3.300 2.300 4.900 4.300h5.500A7 7 0 0 0 8.200 0.300z" fill="#ffb900"/></svg><div class="t" style="left:74px;top:483px;color:#f4f4f4;">点云采集13</div>
<div class="a" style="left:17px;top:510px;width:12px;height:0;border-top:1px dotted #7a7a7a;"></div><svg style="left:30px;top:504px" width="18" height="12" viewBox="0 0 18 12"><path d="M0.8 6C3.4 2.2 6.200 0.9 9 0.9s5.600 1.300 8.200 5.100C14.600 9.800 11.800 11.100 9 11.100S3.400 9.800 0.800 6z" fill="none" stroke="#1aaff5" stroke-width="1.800"/><circle cx="9" cy="6" r="3.700" fill="none" stroke="#1aaff5" stroke-width="1.600"/><circle cx="9" cy="6" r="2" fill="#1c2733"/></svg><svg style="left:51.5px;top:502px" width="16" height="16" viewBox="0 0 16 16"><circle cx="7.200" cy="8.600" r="6.900" fill="#1aaff5"/><path d="M6.400 0.400A7.200 7.200 0 0 1 15.400 8.800H9.400z" fill="#2d2d2d"/><path d="M7.800 0.500l-3.600 2.500 5.400 4.700h5.600A7 7 0 0 0 7.800 0.500z" fill="#2a2a2a"/><path d="M8.200 0.300l-3.300 2.300 4.900 4.300h5.500A7 7 0 0 0 8.200 0.300z" fill="#ffb900"/></svg><div class="t" style="left:74px;top:503px;color:#f4f4f4;">点云采集14</div>
<div class="a" style="left:17px;top:530px;width:12px;height:0;border-top:1px dotted #7a7a7a;"></div><svg style="left:30px;top:524px" width="18" height="12" viewBox="0 0 18 12"><path d="M0.8 6C3.4 2.2 6.200 0.9 9 0.9s5.600 1.300 8.200 5.100C14.600 9.800 11.800 11.100 9 11.100S3.400 9.800 0.800 6z" fill="none" stroke="#1aaff5" stroke-width="1.800"/><circle cx="9" cy="6" r="3.700" fill="none" stroke="#1aaff5" stroke-width="1.600"/><circle cx="9" cy="6" r="2" fill="#1c2733"/></svg><svg style="left:51.5px;top:522px" width="16" height="16" viewBox="0 0 16 16"><circle cx="7.200" cy="8.600" r="6.900" fill="#1aaff5"/><path d="M6.400 0.400A7.200 7.200 0 0 1 15.400 8.800H9.400z" fill="#2d2d2d"/><path d="M7.800 0.500l-3.600 2.500 5.400 4.700h5.600A7 7 0 0 0 7.800 0.500z" fill="#2a2a2a"/><path d="M8.200 0.300l-3.300 2.300 4.900 4.300h5.500A7 7 0 0 0 8.200 0.300z" fill="#ffb900"/></svg><div class="t" style="left:74px;top:523px;color:#f4f4f4;">点云采集15</div>
<div class="a" style="left:17px;top:550px;width:12px;height:0;border-top:1px dotted #7a7a7a;"></div><svg style="left:30px;top:544px" width="18" height="12" viewBox="0 0 18 12"><path d="M0.8 6C3.4 2.2 6.200 0.9 9 0.9s5.600 1.300 8.200 5.100C14.600 9.800 11.800 11.100 9 11.100S3.400 9.800 0.800 6z" fill="none" stroke="#1aaff5" stroke-width="1.800"/><circle cx="9" cy="6" r="3.700" fill="none" stroke="#1aaff5" stroke-width="1.600"/><circle cx="9" cy="6" r="2" fill="#1c2733"/></svg><svg style="left:51.5px;top:542px" width="16" height="16" viewBox="0 0 16 16"><circle cx="7.200" cy="8.600" r="6.900" fill="#1aaff5"/><path d="M6.400 0.400A7.200 7.200 0 0 1 15.400 8.800H9.400z" fill="#2d2d2d"/><path d="M7.800 0.500l-3.600 2.500 5.400 4.700h5.600A7 7 0 0 0 7.800 0.500z" fill="#2a2a2a"/><path d="M8.200 0.300l-3.300 2.300 4.900 4.300h5.500A7 7 0 0 0 8.200 0.300z" fill="#ffb900"/></svg><div class="t" style="left:74px;top:543px;color:#f4f4f4;">点云采集16</div>
<div class="a" style="left:2px;top:620px;width:200px;height:6px;background:#3d3d3d;"></div>
<div class="ph" style="left:2px;top:626px;width:200px;background:#363636;"></div>
<div class="t" style="left:6px;top:632px;color:#f0f0f0;">拼接</div>
<svg style="left:149px;top:634px" width="48" height="12" viewBox="0 0 48 12"><path d="M0.400 3.600h8.200l-4.100 4.600z" fill="#d8d8d8"/><path d="M21.400 1h4.800M22.200 1v5.400M25.400 1v5.400M20.200 6.600h7.200M23.800 6.800V11" stroke="#e6e6e6" stroke-width="1.300" fill="none"/><path d="M39.200 1.800l6.800 6.800M46 1.800l-6.800 6.800" stroke="#e0e0e0" stroke-width="1.600"/></svg>
<div class="a" style="left:2px;top:653px;width:200px;height:24px;background:#2f2f2f;"></div>
<svg style="left:7px;top:658px" width="16" height="15" viewBox="0 0 16 15"><circle cx="6" cy="6" r="4.900" fill="none" stroke="#2f8fe0" stroke-width="1.500"/><path d="M9.600 9.800l4.400 4" stroke="#2f8fe0" stroke-width="1.800"/><path d="M3.600 6h1M5.600 6h1M7.600 6h1" stroke="#6fb4ee" stroke-width="1.100"/></svg>
<svg style="left:32px;top:658px" width="11" height="14" viewBox="0 0 11 14"><path d="M0.600 0.600v10.200l2.600-2.200 2 4.400 2-0.900-2-4.300 3.600-0.300z" fill="#3a97e8"/><path d="M3.200 8.600l2 4.400 2-0.900-2-4.300z" fill="#2a6db0"/></svg>
<svg style="left:52px;top:658px" width="14" height="14" viewBox="0 0 14 14"><path d="M1.800 1.800l10.400 10.400M12.200 1.800L1.800 12.200" stroke="#f2453d" stroke-width="2.500"/></svg>
<svg style="left:74px;top:658px" width="15" height="14" viewBox="0 0 15 14"><path d="M1.400 7.600l3.800 4 8.400-10.200" fill="none" stroke="#27c45a" stroke-width="2.600"/></svg>
<div class="a" style="left:2px;top:677px;width:200px;height:327px;box-sizing:border-box;border:1px solid #4b4b4b;background:#303030;"></div>
<!--VIEW-->
<div class="t ns" style="left:218px;top:175px;color:#fff;">当前: 全部</div>
<div class="t ns" style="left:218px;top:190px;color:#fff;">点数: 543682</div>
<svg style="left:0;top:0" width="1920" height="1040" viewBox="0 0 1920 1040">
 <defs>
  <radialGradient id="bg" cx="0.500" cy="0.500" r="0.720"><stop offset="0.820" stop-color="#50a9ff"/><stop offset="0.940" stop-color="#4a9cf0"/><stop offset="1" stop-color="#3f86d2"/></radialGradient>
  <filter id="soft" x="-5%" y="-5%" width="110%" height="110%"><feGaussianBlur stdDeviation="4.2"/></filter>
 </defs>
 <clipPath id="bc"><path d="M780.0 453.0C790.3 453.0 806.7 453.0 820.0 453.0C833.3 453.0 846.7 453.0 860.0 453.0C873.3 453.0 887.5 453.0 900.0 453.0C912.5 453.0 925.5 452.9 935.0 453.0C944.5 453.1 949.9 453.0 957.0 453.3C964.1 453.6 971.4 454.1 977.7 455.0C984.0 455.9 989.2 457.0 995.0 459.0C1000.8 461.0 1007.5 464.4 1012.3 467.1C1017.1 469.8 1020.0 472.0 1023.8 475.2C1027.6 478.4 1031.8 482.0 1035.3 486.1C1038.8 490.2 1042.1 495.4 1044.6 500.0C1047.1 504.6 1048.7 508.8 1050.3 513.8C1051.9 518.8 1053.3 523.1 1054.4 530.0C1055.5 536.9 1056.2 545.8 1056.7 555.0C1057.2 564.2 1057.4 574.2 1057.5 585.0C1057.6 595.8 1057.5 608.3 1057.5 620.0C1057.5 631.7 1057.5 644.2 1057.5 655.0C1057.5 665.8 1057.6 675.8 1057.2 685.0C1056.8 694.2 1056.4 701.7 1055.0 710.0C1053.6 718.3 1051.7 727.1 1048.8 735.0C1045.8 742.9 1042.7 750.4 1037.5 757.5C1032.3 764.6 1025.0 771.5 1017.5 777.5C1010.0 783.5 1000.4 789.9 992.5 793.8C984.6 797.6 977.9 799.3 970.0 800.8C962.1 802.3 955.0 802.4 945.0 802.8C935.0 803.2 925.8 803.0 910.0 803.0C894.2 803.0 870.0 803.0 850.0 803.0C830.0 803.0 804.7 803.0 790.0 803.0C775.3 803.0 770.0 803.0 762.0 802.8C754.0 802.5 749.8 802.8 742.0 801.5C734.2 800.2 723.2 798.6 715.0 795.0C706.8 791.4 699.6 785.8 692.5 780.0C685.4 774.2 677.9 767.5 672.5 760.0C667.1 752.5 663.1 743.3 660.0 735.0C656.9 726.7 655.2 718.3 653.8 710.0C652.3 701.7 651.9 694.2 651.5 685.0C651.1 675.8 651.3 665.8 651.2 655.0C651.2 644.2 651.2 631.7 651.2 620.0C651.3 608.3 651.3 595.8 651.4 585.0C651.5 574.2 651.4 564.2 652.0 555.0C652.6 545.8 653.2 537.9 655.0 530.0C656.8 522.1 659.2 514.6 662.5 507.5C665.8 500.4 669.6 493.8 675.0 487.5C680.4 481.2 687.5 474.9 695.0 470.0C702.5 465.1 712.8 460.4 720.0 457.8C727.2 455.2 731.7 455.4 738.0 454.6C744.3 453.8 751.0 453.5 758.0 453.2C765.0 452.9 769.7 453.0 780.0 453.0Z"/></clipPath>
 <path d="M780.0 453.0C790.3 453.0 806.7 453.0 820.0 453.0C833.3 453.0 846.7 453.0 860.0 453.0C873.3 453.0 887.5 453.0 900.0 453.0C912.5 453.0 925.5 452.9 935.0 453.0C944.5 453.1 949.9 453.0 957.0 453.3C964.1 453.6 971.4 454.1 977.7 455.0C984.0 455.9 989.2 457.0 995.0 459.0C1000.8 461.0 1007.5 464.4 1012.3 467.1C1017.1 469.8 1020.0 472.0 1023.8 475.2C1027.6 478.4 1031.8 482.0 1035.3 486.1C1038.8 490.2 1042.1 495.4 1044.6 500.0C1047.1 504.6 1048.7 508.8 1050.3 513.8C1051.9 518.8 1053.3 523.1 1054.4 530.0C1055.5 536.9 1056.2 545.8 1056.7 555.0C1057.2 564.2 1057.4 574.2 1057.5 585.0C1057.6 595.8 1057.5 608.3 1057.5 620.0C1057.5 631.7 1057.5 644.2 1057.5 655.0C1057.5 665.8 1057.6 675.8 1057.2 685.0C1056.8 694.2 1056.4 701.7 1055.0 710.0C1053.6 718.3 1051.7 727.1 1048.8 735.0C1045.8 742.9 1042.7 750.4 1037.5 757.5C1032.3 764.6 1025.0 771.5 1017.5 777.5C1010.0 783.5 1000.4 789.9 992.5 793.8C984.6 797.6 977.9 799.3 970.0 800.8C962.1 802.3 955.0 802.4 945.0 802.8C935.0 803.2 925.8 803.0 910.0 803.0C894.2 803.0 870.0 803.0 850.0 803.0C830.0 803.0 804.7 803.0 790.0 803.0C775.3 803.0 770.0 803.0 762.0 802.8C754.0 802.5 749.8 802.8 742.0 801.5C734.2 800.2 723.2 798.6 715.0 795.0C706.8 791.4 699.6 785.8 692.5 780.0C685.4 774.2 677.9 767.5 672.5 760.0C667.1 752.5 663.1 743.3 660.0 735.0C656.9 726.7 655.2 718.3 653.8 710.0C652.3 701.7 651.9 694.2 651.5 685.0C651.1 675.8 651.3 665.8 651.2 655.0C651.2 644.2 651.2 631.7 651.2 620.0C651.3 608.3 651.3 595.8 651.4 585.0C651.5 574.2 651.4 564.2 652.0 555.0C652.6 545.8 653.2 537.9 655.0 530.0C656.8 522.1 659.2 514.6 662.5 507.5C665.8 500.4 669.6 493.8 675.0 487.5C680.4 481.2 687.5 474.9 695.0 470.0C702.5 465.1 712.8 460.4 720.0 457.8C727.2 455.2 731.7 455.4 738.0 454.6C744.3 453.8 751.0 453.5 758.0 453.2C765.0 452.9 769.7 453.0 780.0 453.0Z" fill="#3577c2"/>
 <g clip-path="url(#bc)"><path d="M782.6 460.0C792.5 460.0 808.3 460.0 821.2 460.0C834.1 460.0 846.9 460.0 859.8 460.0C872.7 460.0 886.4 460.0 898.4 460.0C910.5 460.0 923.0 460.0 932.2 460.0C941.4 460.0 946.6 460.0 953.5 460.3C960.3 460.6 967.3 461.0 973.4 461.9C979.6 462.8 984.6 463.8 990.2 465.8C995.7 467.7 1002.2 470.9 1006.9 473.5C1011.5 476.1 1014.3 478.3 1018.0 481.3C1021.7 484.4 1025.7 487.8 1029.1 491.8C1032.4 495.7 1035.6 500.7 1038.0 505.1C1040.5 509.6 1042.0 513.6 1043.5 518.4C1045.1 523.2 1046.5 527.3 1047.5 533.9C1048.5 540.5 1049.2 549.1 1049.7 557.9C1050.2 566.7 1050.4 576.3 1050.5 586.7C1050.6 597.1 1050.5 609.1 1050.5 620.3C1050.5 631.5 1050.5 643.5 1050.5 653.9C1050.4 664.3 1050.6 673.9 1050.2 682.7C1049.8 691.5 1049.4 698.7 1048.1 706.7C1046.7 714.7 1044.9 723.1 1042.0 730.7C1039.2 738.3 1036.2 745.5 1031.2 752.3C1026.2 759.1 1019.1 765.7 1011.9 771.5C1004.6 777.3 995.4 783.4 987.7 787.1C980.1 790.8 973.7 792.4 966.0 793.9C958.4 795.3 951.5 795.5 941.9 795.8C932.2 796.2 923.4 796.0 908.1 796.0C892.8 796.0 869.5 796.0 850.2 796.0C830.8 796.0 806.4 796.0 792.2 796.0C778.1 796.0 772.9 796.0 765.2 795.8C757.5 795.6 753.4 795.8 745.9 794.6C738.3 793.3 727.8 791.8 719.8 788.3C711.8 784.9 704.9 779.5 698.1 773.9C691.2 768.3 684.0 761.9 678.8 754.7C673.5 747.5 669.7 738.7 666.7 730.7C663.7 722.7 662.0 714.7 660.7 706.7C659.3 698.7 658.9 691.5 658.5 682.7C658.1 673.9 658.3 664.3 658.3 653.9C658.2 643.5 658.2 631.5 658.3 620.3C658.3 609.1 658.3 597.1 658.4 586.7C658.5 576.3 658.4 566.7 659.0 557.9C659.6 549.1 660.2 541.5 661.9 533.9C663.6 526.3 665.9 519.1 669.1 512.3C672.3 505.5 676.0 499.1 681.2 493.1C686.4 487.1 693.3 481.1 700.5 476.3C707.7 471.6 717.7 467.1 724.6 464.6C731.6 462.1 735.9 462.3 742.0 461.5C748.1 460.8 754.6 460.4 761.3 460.2C768.1 459.9 772.6 460.0 782.6 460.0Z" fill="#50a9ff" filter="url(#soft)"/></g>
 <path d="M841.7 592.5 L851.5 591.7 L861.3 595.8 L874.4 597.4 L889.1 599.8 L891.5 603.9 L889.9 618.6 L889.9 631.7 L886.6 641.5 L885.8 654.6 L874.4 661.1 L858.0 666.0 L848.2 666.8 L836.8 659.5 L828.6 651.3 L818.8 641.5 L818.0 631.7 L822.1 618.6 L828.6 608.8 L838.4 602.3 L840.0 594.9Z" fill="#000" stroke="#000" stroke-width="1" stroke-linejoin="round"/>
 <path d="M697 728h1v1h-1zM703 606h1v1h-1zM708 519h1v1h-1zM723 490h1v1h-1zM727 792h1v1h-1zM728 645h1v1h-1zM728 782h1v1h-1zM735 717h1v1h-1zM740 513h1v1h-1zM742 646h1v1h-1zM745 623h1v1h-1zM765 691h1v1h-1zM768 637h1v1h-1zM769 721h1v1h-1zM773 599h1v1h-1zM773 724h1v1h-1zM783 655h1v1h-1zM784 586h1v1h-1zM784 609h1v1h-1zM784 680h1v1h-1zM785 615h1v1h-1zM786 665h1v1h-1zM787 636h1v1h-1zM787 657h1v1h-1zM788 486h1v1h-1zM789 591h1v1h-1zM792 671h1v1h-1zM793 645h1v1h-1zM793 746h1v1h-1zM795 619h1v1h-1zM796 572h1v1h-1zM796 683h1v1h-1zM798 612h1v1h-1zM798 643h1v1h-1zM798 695h1v1h-1zM798 710h1v1h-1zM799 612h1v1h-1zM799 633h1v1h-1zM799 646h1v1h-1zM801 604h1v1h-1zM801 647h1v1h-1zM802 599h1v1h-1zM803 639h1v1h-1zM804 622h1v1h-1zM804 626h1v1h-1zM804 636h1v1h-1zM804 645h1v1h-1zM805 626h1v1h-1zM806 644h1v1h-1zM806 651h1v1h-1zM807 644h1v1h-1zM808 602h1v1h-1zM808 625h1v1h-1zM808 690h1v1h-1zM809 622h1v1h-1zM809 635h1v1h-1zM809 647h1v1h-1zM809 648h1v1h-1zM809 672h1v1h-1zM810 637h1v1h-1zM811 526h1v1h-1zM811 620h1v1h-1zM812 564h1v1h-1zM812 610h1v1h-1zM812 630h1v1h-1zM812 679h1v1h-1zM813 595h1v1h-1zM813 616h1v1h-1zM813 623h1v1h-1zM813 629h1v1h-1zM813 642h1v1h-1zM813 645h1v1h-1zM814 613h1v1h-1zM814 632h1v1h-1zM814 633h1v1h-1zM814 637h1v1h-1zM814 638h1v1h-1zM814 639h1v1h-1zM814 673h1v1h-1zM814 677h1v1h-1zM815 628h1v1h-1zM815 629h1v1h-1zM815 633h1v1h-1zM815 634h1v1h-1zM815 637h1v1h-1zM815 638h1v1h-1zM815 642h1v1h-1zM816 596h1v1h-1zM816 615h1v1h-1zM816 649h1v1h-1zM817 592h1v1h-1zM817 593h1v1h-1zM817 609h1v1h-1zM817 618h1v1h-1zM817 623h1v1h-1zM817 624h1v1h-1zM817 629h1v1h-1zM817 631h1v1h-1zM817 634h1v1h-1zM817 638h1v1h-1zM817 639h1v1h-1zM817 640h1v1h-1zM817 646h1v1h-1zM817 665h1v1h-1zM818 602h1v1h-1zM818 620h1v1h-1zM818 623h1v1h-1zM818 628h1v1h-1zM818 641h1v1h-1zM818 643h1v1h-1zM818 647h1v1h-1zM818 650h1v1h-1zM818 663h1v1h-1zM819 616h1v1h-1zM819 627h1v1h-1zM819 643h1v1h-1zM819 646h1v1h-1zM819 656h1v1h-1zM819 660h1v1h-1zM820 614h1v1h-1zM820 616h1v1h-1zM820 618h1v1h-1zM820 622h1v1h-1zM820 645h1v1h-1zM820 657h1v1h-1zM820 664h1v1h-1zM820 667h1v1h-1zM820 671h1v1h-1zM821 601h1v1h-1zM821 609h1v1h-1zM821 611h1v1h-1zM821 649h1v1h-1zM821 650h1v1h-1zM821 651h1v1h-1zM821 659h1v1h-1zM821 665h1v1h-1zM821 681h1v1h-1zM821 700h1v1h-1zM822 590h1v1h-1zM822 609h1v1h-1zM822 646h1v1h-1zM822 647h1v1h-1zM822 652h1v1h-1zM822 655h1v1h-1zM822 657h1v1h-1zM823 602h1v1h-1zM823 611h1v1h-1zM823 647h1v1h-1zM823 649h1v1h-1zM823 650h1v1h-1zM823 651h1v1h-1zM823 654h1v1h-1zM823 662h1v1h-1zM824 597h1v1h-1zM824 608h1v1h-1zM824 612h1v1h-1zM824 614h1v1h-1zM824 640h1v1h-1zM824 642h1v1h-1zM824 648h1v1h-1zM824 654h1v1h-1zM824 656h1v1h-1zM824 681h1v1h-1zM825 606h1v1h-1zM825 609h1v1h-1zM825 610h1v1h-1zM825 650h1v1h-1zM825 651h1v1h-1zM825 653h1v1h-1zM825 654h1v1h-1zM825 660h1v1h-1zM825 671h1v1h-1zM826 600h1v1h-1zM826 607h1v1h-1zM826 610h1v1h-1zM826 650h1v1h-1zM826 651h1v1h-1zM826 658h1v1h-1zM826 665h1v1h-1zM826 679h1v1h-1zM827 588h1v1h-1zM827 602h1v1h-1zM827 604h1v1h-1zM827 605h1v1h-1zM827 607h1v1h-1zM827 653h1v1h-1zM827 661h1v1h-1zM827 663h1v1h-1zM828 598h1v1h-1zM828 654h1v1h-1zM828 657h1v1h-1zM829 569h1v1h-1zM829 602h1v1h-1zM829 605h1v1h-1zM829 606h1v1h-1zM829 655h1v1h-1zM829 656h1v1h-1zM829 659h1v1h-1zM829 692h1v1h-1zM829 696h1v1h-1zM830 605h1v1h-1zM830 654h1v1h-1zM830 656h1v1h-1zM830 658h1v1h-1zM830 681h1v1h-1zM831 566h1v1h-1zM831 596h1v1h-1zM831 656h1v1h-1zM831 657h1v1h-1zM831 659h1v1h-1zM832 603h1v1h-1zM832 659h1v1h-1zM832 662h1v1h-1zM832 667h1v1h-1zM833 596h1v1h-1zM833 602h1v1h-1zM833 656h1v1h-1zM833 659h1v1h-1zM833 665h1v1h-1zM833 677h1v1h-1zM833 688h1v1h-1zM834 601h1v1h-1zM834 658h1v1h-1zM834 670h1v1h-1zM834 673h1v1h-1zM834 676h1v1h-1zM835 600h1v1h-1zM835 665h1v1h-1zM835 666h1v1h-1zM835 668h1v1h-1zM835 670h1v1h-1zM835 681h1v1h-1zM836 574h1v1h-1zM836 585h1v1h-1zM836 600h1v1h-1zM836 659h1v1h-1zM837 595h1v1h-1zM837 600h1v1h-1zM837 602h1v1h-1zM837 603h1v1h-1zM837 669h1v1h-1zM837 674h1v1h-1zM838 545h1v1h-1zM838 591h1v1h-1zM838 595h1v1h-1zM838 661h1v1h-1zM838 663h1v1h-1zM838 664h1v1h-1zM838 665h1v1h-1zM838 669h1v1h-1zM838 671h1v1h-1zM839 591h1v1h-1zM839 667h1v1h-1zM839 682h1v1h-1zM839 701h1v1h-1zM840 664h1v1h-1zM840 665h1v1h-1zM840 680h1v1h-1zM840 697h1v1h-1zM841 573h1v1h-1zM841 590h1v1h-1zM841 591h1v1h-1zM841 665h1v1h-1zM841 666h1v1h-1zM842 586h1v1h-1zM842 667h1v1h-1zM843 580h1v1h-1zM843 588h1v1h-1zM843 656h1v1h-1zM843 664h1v1h-1zM843 665h1v1h-1zM843 687h1v1h-1zM843 688h1v1h-1zM844 584h1v1h-1zM844 588h1v1h-1zM844 590h1v1h-1zM844 665h1v1h-1zM844 666h1v1h-1zM844 675h1v1h-1zM845 578h1v1h-1zM845 587h1v1h-1zM845 590h1v1h-1zM845 695h1v1h-1zM846 589h1v1h-1zM846 673h1v1h-1zM847 672h1v1h-1zM847 674h1v1h-1zM848 584h1v1h-1zM848 669h1v1h-1zM848 671h1v1h-1zM848 672h1v1h-1zM849 668h1v1h-1zM849 672h1v1h-1zM849 680h1v1h-1zM850 670h1v1h-1zM850 674h1v1h-1zM851 571h1v1h-1zM851 590h1v1h-1zM851 668h1v1h-1zM851 685h1v1h-1zM852 591h1v1h-1zM852 667h1v1h-1zM852 668h1v1h-1zM852 670h1v1h-1zM852 671h1v1h-1zM852 672h1v1h-1zM852 679h1v1h-1zM852 686h1v1h-1zM853 591h1v1h-1zM853 667h1v1h-1zM854 669h1v1h-1zM855 585h1v1h-1zM855 668h1v1h-1zM855 669h1v1h-1zM855 670h1v1h-1zM855 676h1v1h-1zM856 592h1v1h-1zM856 668h1v1h-1zM856 670h1v1h-1zM856 677h1v1h-1zM857 562h1v1h-1zM857 593h1v1h-1zM857 670h1v1h-1zM857 671h1v1h-1zM857 686h1v1h-1zM858 579h1v1h-1zM858 668h1v1h-1zM858 669h1v1h-1zM858 684h1v1h-1zM859 666h1v1h-1zM859 667h1v1h-1zM859 682h1v1h-1zM860 591h1v1h-1zM860 672h1v1h-1zM860 683h1v1h-1zM861 567h1v1h-1zM861 595h1v1h-1zM861 669h1v1h-1zM861 716h1v1h-1zM862 672h1v1h-1zM862 684h1v1h-1zM862 715h1v1h-1zM863 666h1v1h-1zM863 668h1v1h-1zM863 671h1v1h-1zM864 591h1v1h-1zM864 595h1v1h-1zM864 665h1v1h-1zM864 666h1v1h-1zM865 592h1v1h-1zM865 670h1v1h-1zM865 672h1v1h-1zM866 666h1v1h-1zM866 670h1v1h-1zM866 671h1v1h-1zM866 675h1v1h-1zM867 589h1v1h-1zM867 590h1v1h-1zM867 593h1v1h-1zM867 666h1v1h-1zM867 669h1v1h-1zM867 678h1v1h-1zM867 705h1v1h-1zM868 589h1v1h-1zM868 596h1v1h-1zM868 664h1v1h-1zM870 582h1v1h-1zM870 585h1v1h-1zM870 663h1v1h-1zM870 665h1v1h-1zM870 676h1v1h-1zM870 680h1v1h-1zM871 590h1v1h-1zM871 663h1v1h-1zM871 666h1v1h-1zM871 671h1v1h-1zM872 664h1v1h-1zM872 668h1v1h-1zM872 669h1v1h-1zM873 663h1v1h-1zM873 664h1v1h-1zM873 689h1v1h-1zM874 505h1v1h-1zM874 663h1v1h-1zM874 670h1v1h-1zM875 596h1v1h-1zM875 663h1v1h-1zM875 665h1v1h-1zM875 669h1v1h-1zM876 595h1v1h-1zM876 662h1v1h-1zM876 679h1v1h-1zM877 663h1v1h-1zM877 667h1v1h-1zM877 672h1v1h-1zM877 678h1v1h-1zM878 506h1v1h-1zM878 675h1v1h-1zM878 689h1v1h-1zM879 594h1v1h-1zM879 596h1v1h-1zM879 659h1v1h-1zM879 661h1v1h-1zM879 663h1v1h-1zM879 683h1v1h-1zM879 698h1v1h-1zM880 554h1v1h-1zM880 691h1v1h-1zM881 676h1v1h-1zM883 591h1v1h-1zM883 657h1v1h-1zM883 665h1v1h-1zM883 667h1v1h-1zM883 727h1v1h-1zM884 658h1v1h-1zM885 515h1v1h-1zM885 580h1v1h-1zM885 657h1v1h-1zM885 661h1v1h-1zM886 591h1v1h-1zM886 663h1v1h-1zM886 762h1v1h-1zM887 476h1v1h-1zM887 592h1v1h-1zM887 596h1v1h-1zM887 643h1v1h-1zM887 647h1v1h-1zM887 648h1v1h-1zM887 651h1v1h-1zM887 657h1v1h-1zM887 664h1v1h-1zM887 679h1v1h-1zM888 599h1v1h-1zM888 663h1v1h-1zM889 566h1v1h-1zM889 636h1v1h-1zM889 643h1v1h-1zM889 645h1v1h-1zM889 653h1v1h-1zM890 638h1v1h-1zM890 639h1v1h-1zM890 646h1v1h-1zM890 653h1v1h-1zM891 599h1v1h-1zM891 617h1v1h-1zM891 620h1v1h-1zM891 621h1v1h-1zM891 635h1v1h-1zM891 639h1v1h-1zM891 651h1v1h-1zM891 652h1v1h-1zM891 660h1v1h-1zM891 688h1v1h-1zM892 596h1v1h-1zM892 600h1v1h-1zM892 606h1v1h-1zM892 638h1v1h-1zM892 643h1v1h-1zM892 647h1v1h-1zM892 650h1v1h-1zM892 675h1v1h-1zM893 599h1v1h-1zM893 633h1v1h-1zM893 634h1v1h-1zM893 638h1v1h-1zM894 610h1v1h-1zM894 620h1v1h-1zM894 621h1v1h-1zM894 649h1v1h-1zM895 480h1v1h-1zM895 613h1v1h-1zM895 622h1v1h-1zM895 627h1v1h-1zM895 640h1v1h-1zM895 641h1v1h-1zM895 682h1v1h-1zM896 599h1v1h-1zM896 606h1v1h-1zM896 612h1v1h-1zM896 643h1v1h-1zM897 599h1v1h-1zM897 642h1v1h-1zM897 689h1v1h-1zM898 635h1v1h-1zM900 616h1v1h-1zM901 595h1v1h-1zM901 604h1v1h-1zM901 626h1v1h-1zM902 633h1v1h-1zM902 693h1v1h-1zM903 596h1v1h-1zM904 663h1v1h-1zM905 575h1v1h-1zM905 629h1v1h-1zM906 611h1v1h-1zM907 570h1v1h-1zM907 595h1v1h-1zM908 598h1v1h-1zM908 656h1v1h-1zM910 636h1v1h-1zM911 626h1v1h-1zM911 685h1v1h-1zM917 586h1v1h-1zM917 617h1v1h-1zM918 666h1v1h-1zM925 617h1v1h-1zM931 668h1v1h-1zM937 695h1v1h-1zM941 636h1v1h-1zM961 689h1v1h-1zM971 475h1v1h-1zM971 579h1v1h-1zM973 504h1v1h-1zM976 775h1v1h-1zM979 505h1v1h-1zM979 788h1v1h-1zM1001 497h1v1h-1zM1016 753h1v1h-1zM1029 718h1v1h-1zM1035 590h1v1h-1zM1040 742h1v1h-1z" fill="#0c0c2c" shape-rendering="crispEdges"/>
 <!-- axes -->
 <path d="M269 941 L270.800 898" stroke="#f20000" stroke-width="2.200"/>
 <path d="M270.200 918 L270.900 898" stroke="#c4221c" stroke-width="2.400"/>
 <path d="M269.500 898.500l1.200-6.500 1.400 6.500z" fill="#e8e070" stroke="#e8e070" stroke-width="0.800"/>
 <path d="M264.800 884.400l6.400 6.600M271.200 884.400l-6.400 6.600" stroke="#b01c1c" stroke-width="0.900"/>
 <path d="M269 940.600H256" stroke="#0000ff" stroke-width="2"/>
 <path d="M256.500 939.200l-6 1.400 6 1.400z" fill="#f0f08a"/>
 <path d="M247 924l2.600 5.200M252.600 924l-4.200 9" stroke="#1414c8" stroke-width="1.300" fill="none"/>
 <path d="M269.500 941.300L309 943.200" stroke="#2fbf2f" stroke-width="2.400"/>
 <path d="M298 942.800L309 943.300" stroke="#00ff00" stroke-width="2.400"/>
 <path d="M308 941.600l8 1.800-8 1.600z" fill="#e8e070"/>
 <path d="M303.200 928.400h6.400l-6.400 6.600h6.800" stroke="#22e022" stroke-width="1.100" fill="none"/>
</svg>
<!--RIGHT-->
<div class="a" style="left:1412px;top:164px;width:5px;height:842px;background:#3c3c3c;"></div>
<div class="a" style="left:1417px;top:164px;width:501px;height:842px;background:#252525;"></div>
<div class="ph" style="left:1416px;top:164px;width:502px;"></div>
<div class="t" style="left:1422px;top:170px;color:#f0f0f0;">采集窗口</div>
<svg style="left:1865px;top:172px" width="48" height="12" viewBox="0 0 48 12"><path d="M0.400 3.600h8.200l-4.100 4.600z" fill="#d8d8d8"/><path d="M21.400 1h4.800M22.200 1v5.400M25.400 1v5.400M20.200 6.600h7.200M23.800 6.800V11" stroke="#e6e6e6" stroke-width="1.300" fill="none"/><path d="M39.200 1.800l6.800 6.800M46 1.800l-6.800 6.800" stroke="#e0e0e0" stroke-width="1.600"/></svg>
<div class="a" style="left:1416px;top:191px;width:33px;height:815px;background:#353535;"></div>
<div class="a" style="left:1449px;top:191px;width:469px;height:815px;background:#252525;"></div>
<!-- power -->
<svg style="left:1421px;top:195px" width="22" height="22" viewBox="0 0 22 22"><circle cx="11" cy="11" r="10.200" fill="#e8511c"/><path d="M7.400 5.800a6.300 6.300 0 1 0 7.200 0" fill="none" stroke="#fff" stroke-width="1.800"/><path d="M11 3.800v8" stroke="#fff" stroke-width="1.900"/></svg>
<div class="a" style="left:1419px;top:223px;width:26px;height:1px;background:#4a4a4a;"></div>
<!-- L -->
<svg style="left:1421.500px;top:229px" width="22" height="22" viewBox="0 0 22 22"><g fill="#27e427"><path d="M7.400 4.200L11 0.800l3.600 3.400Q11 2.600 7.400 4.200z"/><path d="M7.400 17.800L11 21.200l3.600-3.400Q11 19.400 7.400 17.800z"/><path d="M4.200 7.400L0.800 11l3.400 3.600Q2.600 11 4.200 7.400z"/><path d="M17.800 7.400L21.200 11l-3.400 3.600Q19.400 11 17.800 7.400z"/></g><path d="M8.600 5.200v10.400h6.400" fill="none" stroke="#4b9ce8" stroke-width="2.600"/></svg>
<!-- R -->
<svg style="left:1421.500px;top:255px" width="22" height="22" viewBox="0 0 22 22"><g fill="#27e427"><path d="M7.400 4.200L11 0.800l3.600 3.400Q11 2.600 7.400 4.200z"/><path d="M7.400 17.800L11 21.200l3.600-3.400Q11 19.400 7.400 17.800z"/><path d="M4.200 7.400L0.800 11l3.400 3.600Q2.600 11 4.200 7.400z"/><path d="M17.800 7.400L21.200 11l-3.400 3.600Q19.400 11 17.800 7.400z"/></g><path d="M8 16.600V5.800h3.400a2.900 2.900 0 0 1 0 5.800H8M11.600 11.600l3.400 5" fill="none" stroke="#4b9ce8" stroke-width="2.500"/></svg>
<!-- swap -->
<svg style="left:1421px;top:281px" width="22" height="22" viewBox="0 0 22 22"><path d="M0.800 6.400h13.400V1l6.800 8.600v0.200H0.800z" fill="#1e9ce6"/><path d="M21.200 12.800H7.800v0 0l0 0H0.800l7.600 8.200v-4.800h12.800z" fill="#f8ac1a"/></svg>
<!-- group boxes -->
<div class="a" style="left:1461px;top:199px;width:408px;height:239px;box-sizing:border-box;border:1px solid #474747;border-radius:3px;"></div>
<div class="a" style="left:1467px;top:192px;width:48px;height:15px;background:#252525;"></div>
<div class="t song" style="left:1471px;top:192px;">左相机</div>
<div class="a" style="left:1461px;top:444px;width:408px;height:239px;box-sizing:border-box;border:1px solid #474747;border-radius:3px;"></div>
<div class="a" style="left:1467px;top:437px;width:48px;height:15px;background:#252525;"></div>
<div class="t song" style="left:1471px;top:437px;">右相机</div>
<!-- controls -->
<div class="t song" style="left:1457px;top:702px;">亮度调节:</div>
<div class="a" style="left:1773px;top:700px;width:96px;height:23px;background:#414141;"></div><div class="a" style="left:1775px;top:702px;width:75px;height:19px;background:#383838;"></div>
<div class="a" style="left:1850px;top:700px;width:19px;height:23px;background:#4a4a4a;"></div>
<div class="t song" style="left:1777px;top:705px;">采集范围:0</div>
<div class="t song" style="left:1459px;top:731px;">对焦级别:</div>
<div class="inp" style="left:1524px;top:727px;width:47px;"></div>
<div class="t song" style="left:1528px;top:730px;letter-spacing:1px;">0.1</div>
<div class="t song" style="left:1581px;top:731px;">标记点直径<span style="letter-spacing:0;font-size:11px;">(mm):</span></div>
<div class="inp" style="left:1691px;top:727px;width:35px;"></div>
<div class="t song" style="left:1715px;top:730px;letter-spacing:0;">0</div>
<div class="inp" style="left:1743px;top:727px;width:35px;"></div>
<div class="t song" style="left:1747px;top:730px;letter-spacing:0;">1000</div>
<div class="t song" style="left:1786px;top:731px;">防抖:</div>
<div class="a" style="left:1824px;top:727px;width:45px;height:23px;background:#414141;"></div><div class="a" style="left:1826px;top:729px;width:23px;height:19px;background:#383838;"></div>
<div class="a" style="left:1849px;top:727px;width:20px;height:23px;background:#484848;"></div>
<div class="t song" style="left:1829px;top:732px;letter-spacing:0;">0</div>
<div class="t song" style="left:1459px;top:756px;">环境温度(℃):</div>
<div class="inp" style="left:1552px;top:752px;width:47px;"></div>
<div class="t song" style="left:1556px;top:755px;letter-spacing:0;">20</div>
<svg style="left:0;top:0" width="1920" height="1040" viewBox="0 0 1920 1040"><rect x="1530.0" y="696" width="1" height="3.500" fill="#7a7a7a"/><rect x="1541.8" y="696" width="1" height="3.500" fill="#7a7a7a"/><rect x="1553.6" y="696" width="1" height="3.500" fill="#7a7a7a"/><rect x="1565.3" y="696" width="1" height="3.500" fill="#7a7a7a"/><rect x="1577.1" y="696" width="1" height="3.500" fill="#7a7a7a"/><rect x="1588.9" y="696" width="1" height="3.500" fill="#7a7a7a"/><rect x="1600.7" y="696" width="1" height="3.500" fill="#7a7a7a"/><rect x="1612.5" y="696" width="1" height="3.500" fill="#7a7a7a"/><rect x="1624.2" y="696" width="1" height="3.500" fill="#7a7a7a"/><rect x="1636.0" y="696" width="1" height="3.500" fill="#7a7a7a"/><rect x="1647.8" y="696" width="1" height="3.500" fill="#7a7a7a"/><rect x="1659.6" y="696" width="1" height="3.500" fill="#7a7a7a"/><rect x="1671.4" y="696" width="1" height="3.500" fill="#7a7a7a"/><rect x="1683.1" y="696" width="1" height="3.500" fill="#7a7a7a"/><rect x="1694.9" y="696" width="1" height="3.500" fill="#7a7a7a"/><rect x="1706.7" y="696" width="1" height="3.500" fill="#7a7a7a"/><rect x="1718.5" y="696" width="1" height="3.500" fill="#7a7a7a"/><rect x="1730.3" y="696" width="1" height="3.500" fill="#7a7a7a"/><rect x="1742.0" y="696" width="1" height="3.500" fill="#7a7a7a"/><rect x="1753.8" y="696" width="1" height="3.500" fill="#7a7a7a"/>
<rect x="1525" y="708" width="234" height="4" rx="1" fill="#3e3e3e"/><rect x="1525" y="708" width="17" height="4" fill="#0a6fc4"/><circle cx="1542.500" cy="709.300" r="5.600" fill="#0b72c8"/>
<path d="M1856.300 710l2.700 3 2.700-3z" fill="#c8c8c8"/><path d="M1855.300 737l2.700 3 2.700-3z" fill="#c8c8c8"/>
<rect x="1729" y="737" width="11" height="1" fill="#5a5a5a"/>
</svg>
<!--STATUS-->
<div class="a" style="left:32px;top:1037px;width:12px;height:12px;border-radius:6px;background:#c8232b;"></div>
<div class="a" style="left:985px;top:1036px;width:39px;height:8px;border-radius:3px 3px 0 0;background:#e9988c;"></div>
<div class="a" style="left:1118px;top:1036px;width:38px;height:8px;border-radius:3px 3px 0 0;background:#f5f3f4;"></div>
<div class="t" style="left:11px;top:1011px;color:#f0f0f0;">点云数 : 543682</div>
<div class="t" style="left:118px;top:1011px;color:#f0f0f0;">已选择 : 0</div>
<div class="t" style="left:190px;top:1011px;color:#f0f0f0;">已删除 : 0</div>
<div class="a" style="left:275px;top:1012px;width:11px;height:11px;box-sizing:border-box;border:1px solid #484848;background:#525252;"></div>
<div class="t" style="left:291px;top:1011px;color:#8a8a8a;">已关联机器人</div>
<div class="a" style="left:1722px;top:1012px;width:192px;height:13px;box-sizing:border-box;border:1px solid #2a78b6;background:#cce8ff;"></div>
<!--WM-->
<div class="a" id="wmc" style="left:0;top:31px;width:1920px;height:975px;overflow:hidden;pointer-events:none;">
<div class="wm" style="left:48px;top:665px;">来高科技<span class="wp">(</span>天津<span class="wp">)</span>有限公司</div>
<div class="wm" style="left:50px;top:284px;">来高科技<span class="wp">(</span>天津<span class="wp">)</span>有限公司</div>
<div class="wm" style="left:607.5px;top:234px;">来高科技<span class="wp">(</span>天津<span class="wp">)</span>有限公司</div>
<div class="wm" style="left:646px;top:538px;">来高科技<span class="wp">(</span>天津<span class="wp">)</span>有限公司</div>
<div class="wm" style="left:1105px;top:536.5px;">来高科技<span class="wp">(</span>天津<span class="wp">)</span>有限公司</div>
<div class="wm" style="left:1334px;top:201px;">来高科技<span class="wp">(</span>天津<span class="wp">)</span>有限公司</div>
<div class="wm" style="left:367.5px;top:891.5px;">来高科技<span class="wp">(</span>天津<span class="wp">)</span>有限公司</div>
<div class="wm" style="left:914px;top:938px;">来高科技<span class="wp">(</span>天津<span class="wp">)</span>有限公司</div>
<div class="wm" style="left:1407.5px;top:938px;">来高科技<span class="wp">(</span>天津<span class="wp">)</span>有限公司</div>
</div>
</body>
</html>
